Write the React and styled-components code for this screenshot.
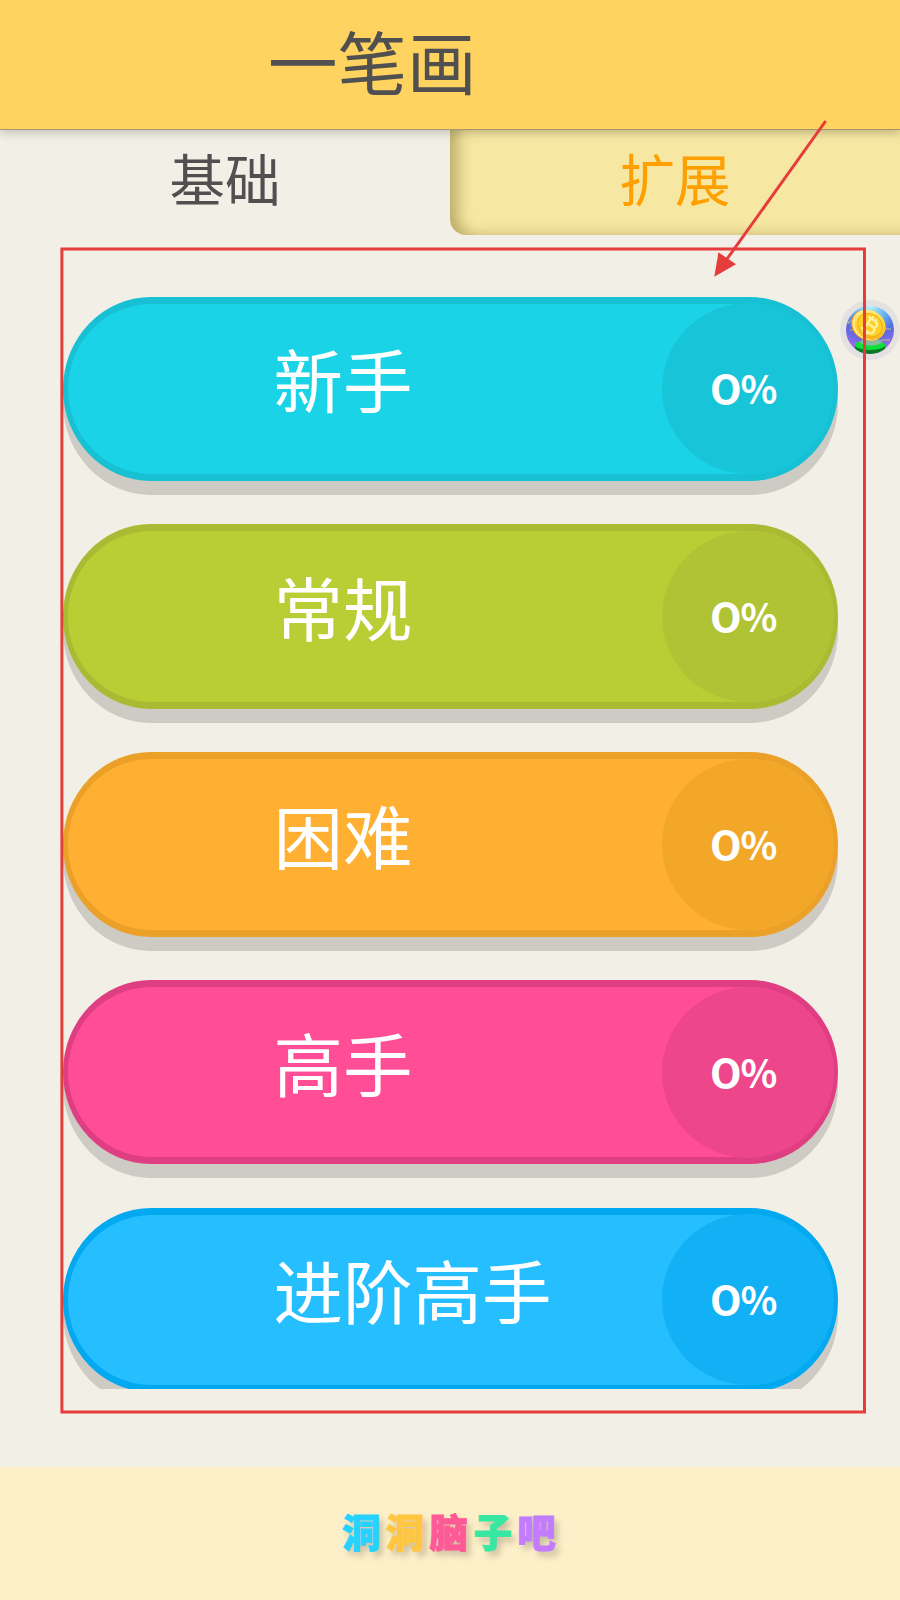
import React from "react";
import styled, { createGlobalStyle } from "styled-components";

const GlobalStyle = createGlobalStyle`
  * { box-sizing: border-box; }
  body { margin: 0; background: #f2efe7; font-family: "Noto Sans CJK SC", sans-serif; }
`;

const Page = styled.div`
  position: relative;
  display: flex;
  flex-direction: column;
  width: 900px;
  height: 1600px;
  overflow: hidden;
  background: #f2efe7;
`;

const Header = styled.header`
  position: relative;
  z-index: 1;
  flex: none;
  height: 130px;
  padding-left: 268px;
  background: #ffd35f;
  border-bottom: 1px solid #a99670;
  box-shadow: 0 3px 9px rgba(80, 75, 60, 0.28);
`;

const Title = styled.h1`
  margin: 0;
  font-size: 69.5px;
  font-weight: 400;
  line-height: 119px;
  color: #505050;
`;

const Tabs = styled.nav`
  flex: none;
  display: flex;
  height: 105px;
`;

const Tab = styled.button`
  flex: 1;
  padding: 0 0 12px;
  border: 0;
  border-radius: 0 0 0 16px;
  background: ${(p) => (p.$active ? "transparent" : "#f6e7a2")};
  box-shadow: ${(p) => (p.$active ? "none" : "inset 12px -3px 14px -4px rgba(110, 95, 30, 0.42)")};
  color: ${(p) => (p.$active ? "#505050" : "#ffa000")};
  font: 400 55.5px/90px "Noto Sans CJK SC", sans-serif;
`;

const LevelList = styled.main`
  flex: none;
  display: flex;
  flex-direction: column;
  gap: 43.3px;
  height: 1154px;
  padding: 61.5px 62px 0 63px;
  overflow: hidden;
`;

const Level = styled.button`
  flex: none;
  display: flex;
  justify-content: space-between;
  align-items: center;
  height: 184.5px;
  padding: 0 0 0 205.5px;
  border: solid ${(p) => p.$edge};
  border-width: 7px 5px;
  border-radius: 88px / 92px;
  background: ${(p) => p.$fill};
  box-shadow: 0 14px 0 #cecbc4;
  color: #fff;
`;

const LevelName = styled.span`
  padding-bottom: 21px;
  font: 400 69.5px/100px "Noto Sans CJK SC", sans-serif;
`;

const Progress = styled.span`
  display: flex;
  justify-content: center;
  align-items: center;
  width: 172px;
  height: 171px;
  margin-right: -1px;
  padding: 1px 4px 0 0;
  border-radius: 50%;
  background: ${(p) => p.$tint};
  font: 400 41px/60px Lato, sans-serif;
`;

const Digits = styled.span`
  display: inline-block;
  margin-right: 2px;
  -webkit-text-stroke: 1.8px #fff;
  transform: translateY(-0.5px) scaleX(1.18);
`;

const Percent = styled.span`
  display: inline-block;
  font: 700 39.5px/60px "Noto Sans CJK SC", sans-serif;
  transform: translateY(-2px) scaleX(0.97);
`;

const Footer = styled.footer`
  flex: none;
  margin-top: 78px;
  height: 133px;
  padding: 36px 0 0 342px;
  display: flex;
  background: #fdf0c8;
`;

const BrandGlyph = styled.span`
  width: 43.8px;
  color: ${(p) => p.$color};
  font: 900 38.5px/54px "Noto Sans CJK SC", sans-serif;
  -webkit-text-stroke: 0.9px ${(p) => p.$color};
  text-shadow: 4px 5px 6px rgba(100, 90, 80, 0.35);
`;

const Bubble = styled.div`
  position: absolute;
  left: 840px;
  top: 300px;
  display: flex;
  width: 60px;
  height: 60px;
  padding: 6px;
  border-radius: 50%;
  background: #e3e2e1;
`;

const Markup = styled.svg`
  position: absolute;
  inset: 0;
  z-index: 2;
  pointer-events: none;
`;

const levels = [
  { name: "新手", fill: "#1ad3e6", edge: "#18c0d3", tint: "#18c4d8" },
  { name: "常规", fill: "#b9ce35", edge: "#aabb33", tint: "#b0c335" },
  { name: "困难", fill: "#ffb033", edge: "#eba028", tint: "#f2a729" },
  { name: "高手", fill: "#ff4e95", edge: "#e03e82", tint: "#ee468a" },
  { name: "进阶高手", fill: "#25beff", edge: "#02a8f0", tint: "#12b0f4" },
];

const brand = [
  ["洞", "#28d2ff"],
  ["洞", "#ffc642"],
  ["脑", "#ff5a96"],
  ["子", "#38e8a2"],
  ["吧", "#c47cff"],
];

function Coin() {
  return (
    <svg width="48" height="48" viewBox="0 0 48 48">
      <defs>
        <radialGradient id="sky" cx=".5" cy="0" r="1">
          <stop offset="0" stopColor="#b9f4fb" />
          <stop offset=".32" stopColor="#69b9ee" />
          <stop offset=".62" stopColor="#536ae2" />
          <stop offset="1" stopColor="#b26be8" />
        </radialGradient>
        <linearGradient id="gold" x1="0" y1="0" x2="1" y2="1">
          <stop offset="0" stopColor="#fff2a0" />
          <stop offset=".5" stopColor="#ffd62e" />
          <stop offset="1" stopColor="#f3a719" />
        </linearGradient>
        <clipPath id="disc"><circle cx="24" cy="24" r="24" /></clipPath>
      </defs>
      <g clipPath="url(#disc)">
        <rect width="48" height="48" fill="url(#sky)" />
        <path d="M2 17l4-3M4 24h3M38 23h7M35 34h9M2 15v3" stroke="#c8bd83" fill="none" />
        <path d="M9 39v4q3 5 15 5t15-5v-4z" fill="#087b26" />
        <ellipse cx="24" cy="39" rx="15" ry="5" fill="#0ce139" />
        <ellipse cx="25" cy="36" rx="11" ry="3.5" fill="#87b99a" />
        <g transform="rotate(35 24 19)">
          <ellipse cx="22" cy="21" rx="17" ry="14.5" fill="#f48d18" />
          <ellipse cx="23" cy="20" rx="17" ry="14.5" fill="#fff0a0" />
          <ellipse cx="24" cy="19" rx="16.5" ry="14" fill="url(#gold)" />
          <ellipse cx="24" cy="19" rx="13" ry="10.8" fill="#ffcf28" stroke="#f3aa19" />
          <path d="M20 13h6q4 0 4 3t-3 3q4 0 4 3.5T27 26h-7M21 13v13M21 19h6M22 10v3m4-3v3m-4 13v3m4-3v3M18 13h4M18 26h4" fill="none" stroke="#fff3a2" strokeWidth="2.2" />
        </g>
      </g>
    </svg>
  );
}

export default function App() {
  return (
    <>
      <GlobalStyle />
      <Page>
        <Header><Title>一笔画</Title></Header>
        <Tabs>
          <Tab $active>基础</Tab>
          <Tab>扩展</Tab>
        </Tabs>
        <LevelList>
          {levels.map((l) => (
            <Level key={l.name} $fill={l.fill} $edge={l.edge}>
              <LevelName>{l.name}</LevelName>
              <Progress $tint={l.tint}><Digits>0</Digits><Percent>%</Percent></Progress>
            </Level>
          ))}
        </LevelList>
        <Footer>
          {brand.map(([char, color], i) => (
            <BrandGlyph key={i} $color={color}>{char}</BrandGlyph>
          ))}
        </Footer>
        <Bubble><Coin /></Bubble>
        <Markup width="900" height="1600" viewBox="0 0 900 1600">
          <rect x="61.9" y="249" width="802.6" height="1163" fill="none" stroke="#e63c3c" strokeWidth="3" />
          <path d="M825.7 121L727 259" stroke="#e63c3c" strokeWidth="3" />
          <path d="M714.3 276.7L718.5 252.3L736 264.3Z" fill="#e63c3c" />
        </Markup>
      </Page>
    </>
  );
}
